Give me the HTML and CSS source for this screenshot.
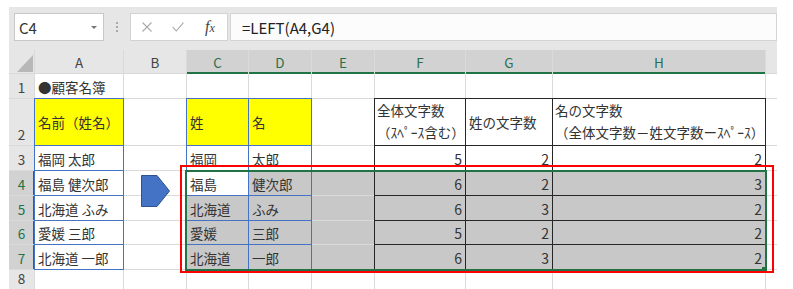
FILE: index.html
```html
<!DOCTYPE html>
<html lang="ja">
<head>
  <meta charset="UTF-8" />
  <meta name="viewport" content="width=device-width, initial-scale=1.0"/>
  <title>顧客名簿 - LEFT関数</title>
  <link rel="stylesheet" href="styles.css">
</head>
<body>
  <div class="app">
    <div class="formula-bar">
      <div class="name-box"><span>C4</span><span class="caret"></span></div>
      <div class="grip"><span></span></div>
      <div class="fx-buttons">
        <svg width="10" height="10" viewBox="0 0 10 10"><path d="M0.5 0.5L9.5 9.5M9.5 0.5L0.5 9.5" stroke="#a9a9a9" stroke-width="1.1" fill="none"/></svg>
        <svg width="12" height="10" viewBox="0 0 12 10"><path d="M0.8 5.2L4.3 9L11.4 0.6" stroke="#a9a9a9" stroke-width="1.1" fill="none"/></svg>
        <i class="fx">f<span>x</span></i>
      </div>
      <div class="formula">=LEFT(A4,G4)</div>
    </div>

    <div class="sheet-wrap">
      <div class="sheet">
        <!-- column headers -->
        <div class="corner"><span></span></div>
        <div class="hd">A</div>
        <div class="hd">B</div>
        <div class="hd sel">C</div>
        <div class="hd sel">D</div>
        <div class="hd sel">E</div>
        <div class="hd sel">F</div>
        <div class="hd sel">G</div>
        <div class="hd sel">H</div>
        <div class="hd"></div>

        <!-- row 1 -->
        <div class="rh">1</div>
        <div class="c">●顧客名簿</div>
        <div class="c"></div>
        <div class="c"></div>
        <div class="c"></div>
        <div class="c"></div>
        <div class="c"></div>
        <div class="c"></div>
        <div class="c"></div>
        <div class="c"></div>

        <!-- row 2 -->
        <div class="rh">2</div>
        <div class="c blue yel mid">名前（姓名）</div>
        <div class="c"></div>
        <div class="c blue yel mid">姓</div>
        <div class="c blue yel mid">名</div>
        <div class="c"></div>
        <div class="c blk two"><span>全体文字数</span><span>（ｽﾍﾟｰｽ含む）</span></div>
        <div class="c blk mid">姓の文字数</div>
        <div class="c blk two"><span>名の文字数</span><span>（全体文字数－姓文字数ーｽﾍﾟｰｽ）</span></div>
        <div class="c"></div>

        <!-- row 3 -->
        <div class="rh">3</div>
        <div class="c blue">福岡 太郎</div>
        <div class="c"></div>
        <div class="c blue">福岡</div>
        <div class="c blue">太郎</div>
        <div class="c"></div>
        <div class="c blk num">5</div>
        <div class="c blk num">2</div>
        <div class="c blk num">2</div>
        <div class="c"></div>

        <!-- row 4 -->
        <div class="rh sel">4</div>
        <div class="c blue">福島 健次郎</div>
        <div class="c"></div>
        <div class="c blue">福島</div>
        <div class="c blue on">健次郎</div>
        <div class="c on"></div>
        <div class="c blk num on">6</div>
        <div class="c blk num on">2</div>
        <div class="c blk num on">3</div>
        <div class="c"></div>

        <!-- row 5 -->
        <div class="rh sel">5</div>
        <div class="c blue">北海道 ふみ</div>
        <div class="c"></div>
        <div class="c blue on">北海道</div>
        <div class="c blue on">ふみ</div>
        <div class="c on"></div>
        <div class="c blk num on">6</div>
        <div class="c blk num on">3</div>
        <div class="c blk num on">2</div>
        <div class="c"></div>

        <!-- row 6 -->
        <div class="rh sel">6</div>
        <div class="c blue">愛媛 三郎</div>
        <div class="c"></div>
        <div class="c blue on">愛媛</div>
        <div class="c blue on">三郎</div>
        <div class="c on"></div>
        <div class="c blk num on">5</div>
        <div class="c blk num on">2</div>
        <div class="c blk num on">2</div>
        <div class="c"></div>

        <!-- row 7 -->
        <div class="rh sel">7</div>
        <div class="c blue">北海道 一郎</div>
        <div class="c"></div>
        <div class="c blue on">北海道</div>
        <div class="c blue on">一郎</div>
        <div class="c on"></div>
        <div class="c blk num on">6</div>
        <div class="c blk num on">3</div>
        <div class="c blk num on">2</div>
        <div class="c"></div>

        <!-- row 8 -->
        <div class="rh">8</div>
        <div class="c"></div>
        <div class="c"></div>
        <div class="c"></div>
        <div class="c"></div>
        <div class="c"></div>
        <div class="c"></div>
        <div class="c"></div>
        <div class="c"></div>
        <div class="c"></div>
      </div>

      <!-- shapes lying over the grid -->
      <svg class="arrow" width="29" height="32" viewBox="0 0 29 32"><path d="M0.5 0.5H16L28.5 16L16 31.5H0.5Z" fill="#4472c4" stroke="#2f528f"/></svg>
      <div class="selection"></div>
      <div class="handle"></div>
      <div class="callout"></div>
    </div>
  </div>
</body>
</html>
```

FILE: styles.css
```css
html, body {
  height: 100%;
}
body {
  margin: 0;
  background: #fff;
  color: #333;
  font-family: "Noto Sans CJK JP", sans-serif;
  overflow: hidden;
}
.app {
  margin: 7px 0 0 9px;
  width: 768px;
}

/* formula bar */
.formula-bar {
  display: flex;
  height: 28px;
  padding: 6px 0 9px 5px;
  background: #e6e6e6;
}
.name-box {
  box-sizing: border-box;
  width: 90px;
  display: flex;
  align-items: center;
  justify-content: space-between;
  padding: 0 6px 0 4px;
  background: #fff;
  border: 1px solid #c8c8c8;
  font-size: 15px;
  color: #333;
}
.caret {
  width: 0;
  height: 0;
  border-left: 3px solid transparent;
  border-right: 3px solid transparent;
  border-top: 3px solid #777;
  margin-top: 1px;
}
.grip {
  width: 26px;
  display: flex;
  align-items: center;
  justify-content: center;
}
.grip span {
  height: 10px;
  border-left: 2px dotted #a8a8a8;
  margin-left: -1px;
}
.fx-buttons {
  box-sizing: border-box;
  width: 98px;
  display: flex;
  align-items: center;
  gap: 20px;
  padding-left: 11px;
  background: #fff;
  border: 1px solid #d2d2d2;
}
.fx {
  font-family: "Liberation Serif", serif;
  font-size: 16px;
  color: #444;
  margin-left: 1px;
}
.fx span {
  font-size: 12px;
}
.formula {
  flex: 1;
  margin-left: 2px;
  display: flex;
  align-items: center;
  padding-left: 11px;
  background: #fcfcfc;
  border: 1px solid #d4d4d4;
  font-size: 15px;
  color: #222;
}

/* grid */
.sheet-wrap {
  position: relative;
}
.sheet {
  display: grid;
  grid-template-columns: 25px 88px 62px 61px 62px 62px 90px 86px 212px 11px;
  grid-template-rows: 23px 24px 46px 24px 24px 24px 23px 24px 19px;
  gap: 1px;
  background: #dadada;
}
.corner {
  display: flex;
  align-items: flex-end;
  justify-content: flex-end;
  padding: 0 1px 1px 0;
  background: #e6e6e6;
}
.corner span {
  width: 16px;
  height: 17px;
  background: #b8b8b8;
  clip-path: polygon(100% 0, 100% 100%, 0 100%);
}
.hd {
  display: flex;
  align-items: center;
  justify-content: center;
  background: #e6e6e6;
  font-size: 13.5px;
  color: #444;
}
.hd.sel {
  background: #d2d2d2;
  color: #2b6e4a;
  box-shadow: inset 0 -1px 0 #217346, 0 1px 0 #217346;
}
.rh {
  display: flex;
  align-items: flex-end;
  justify-content: center;
  padding-bottom: 3px;
  background: #e6e6e6;
  font-size: 13.5px;
  line-height: 15px;
  color: #444;
}
.rh.sel {
  background: #d2d2d2;
  color: #217346;
  box-shadow: inset -1px 0 0 #217346, 1px 0 0 #217346;
}
.c {
  display: flex;
  align-items: flex-end;
  padding: 0 2px 1px 3px;
  background: #fff;
  font-size: 13.5px;
  white-space: nowrap;
}
.mid {
  align-items: center;
  padding-bottom: 0;
}
.two {
  flex-direction: column;
  align-items: flex-start;
  padding: 0 0 0 2px;
  line-height: 22px;
}
.num {
  justify-content: flex-end;
  padding-right: 3px;
  font-size: 14px;
}
.yel {
  background: #ffff00;
}
.on {
  background: #c8c8c8;
}
.blue {
  outline: 1px solid #4472c4;
}
.blk {
  outline: 1px solid #262626;
}

/* overlays */
.arrow {
  position: absolute;
  left: 132px;
  top: 125px;
  z-index: 2;
}
.selection {
  position: absolute;
  left: 176px;
  top: 120px;
  width: 582px;
  height: 101px;
  box-sizing: border-box;
  border: 2px solid #217346;
  z-index: 2;
}
.handle {
  position: absolute;
  left: 753px;
  top: 217px;
  width: 5px;
  height: 5px;
  background: #217346;
  z-index: 3;
}
.callout {
  position: absolute;
  left: 171px;
  top: 115px;
  width: 594px;
  height: 108px;
  box-sizing: border-box;
  border: 2px solid #ff0000;
  z-index: 4;
}
```
